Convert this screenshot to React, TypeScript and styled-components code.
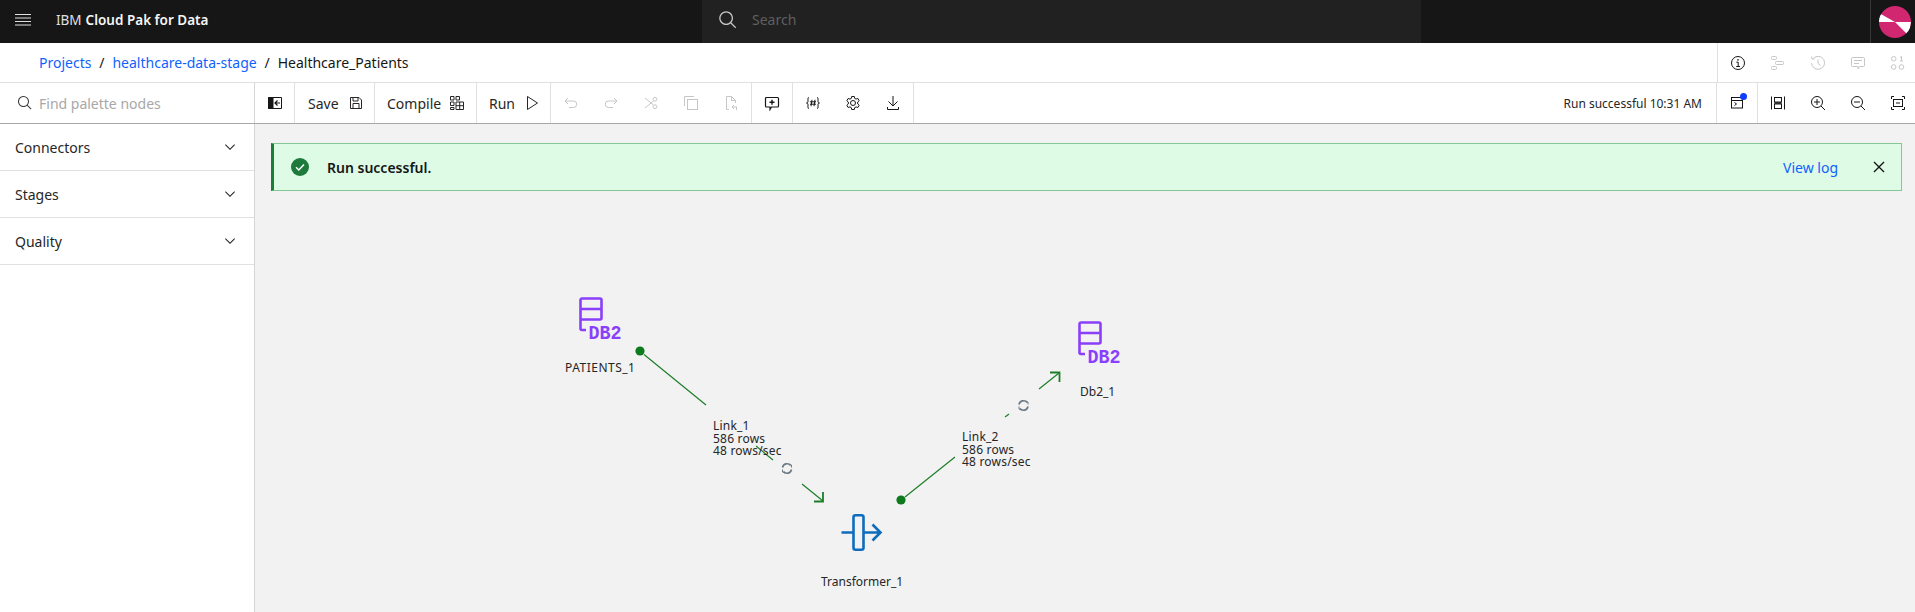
import React from 'react';
import styled, { createGlobalStyle } from 'styled-components';

const GlobalStyle = createGlobalStyle`
  html, body { margin: 0; padding: 0; background: #fff; overflow: hidden; }
  body {
    font-family: "Noto Sans", "Open Sans", sans-serif;
    font-size: 14px;
    color: #161616;
  }
  * { box-sizing: border-box; }
`;

const Page = styled.div`
  width: 1915px;
  height: 612px;
  display: flex;
  flex-direction: column;
  overflow: hidden;
`;

/* top header */
const Header = styled.header`
  height: 43px;
  flex: none;
  display: flex;
  align-items: stretch;
  background: #161616;
  color: #f4f4f4;
`;

const MenuButton = styled.div`
  width: 46px;
  padding: 0 0 4px 14px;
  display: flex;
  align-items: center;
`;

const Brand = styled.div`
  width: 656px;
  display: flex;
  align-items: center;
  gap: 4px;
  padding: 0 0 3px 10px;
  font-size: 13.5px;
  color: #e0e0e0;
  strong { font-weight: 600; color: #f4f4f4; }
`;

const HeaderSearch = styled.div`
  width: 719px;
  background: #212121;
  display: flex;
  align-items: center;
  gap: 14px;
  padding: 0 0 4px 16px;
  color: #5f5f5f;
  font-size: 14px;
  svg { color: #c6c6c6; }
`;

const HeaderSpacer = styled.div`
  flex: 1;
`;

const AvatarCell = styled.div`
  width: 45px;
  border-left: 1px solid #393939;
  display: flex;
  align-items: center;
  justify-content: center;
  padding-left: 3px;
`;

/* breadcrumb row */
const CrumbRow = styled.div`
  height: 40px;
  flex: none;
  display: flex;
  align-items: stretch;
  border-bottom: 1px solid #e0e0e0;
`;

const Crumbs = styled.nav`
  flex: 1;
  display: flex;
  align-items: center;
  padding-left: 39px;
  font-size: 14px;
`;

const CrumbLink = styled.a`
  color: #0f62fe;
`;

const CrumbSlash = styled.span`
  width: 21px;
  text-align: center;
  color: #161616;
`;

const SidePanelIcons = styled.div`
  display: flex;
  border-left: 1px solid #e0e0e0;
  margin-right: -3px;
`;

/* toolbar */
const Toolbar = styled.div`
  height: 41px;
  flex: none;
  display: flex;
  align-items: stretch;
  border-bottom: 1px solid #a8a8a8;
`;

const PaletteSearch = styled.div`
  width: 255px;
  flex: none;
  display: flex;
  align-items: center;
  gap: 6px;
  padding-left: 17px;
  border-right: 1px solid #d6d6d6;
  color: #a8a8a8;
  font-size: 14px;
  svg { color: #393939; }
`;

const ToolGroup = styled.div<{ $width?: number }>`
  display: flex;
  align-items: center;
  flex: none;
  border-right: 1px solid #e0e0e0;
  ${(p) => (p.$width ? `width: ${p.$width}px;` : '')}
`;

const TextTool = styled.div<{ $gap: number; $pad?: number }>`
  display: flex;
  align-items: center;
  gap: ${(p) => p.$gap}px;
  padding-left: ${(p) => p.$pad ?? 12}px;
  font-size: 14px;
  color: #262626;
`;

const IconCell = styled.div<{ $muted?: boolean }>`
  width: 40px;
  height: 40px;
  flex: none;
  display: flex;
  align-items: center;
  justify-content: center;
  position: relative;
  color: ${(p) => (p.$muted ? '#c6c6c6' : '#161616')};
`;

const NotifyDot = styled.span`
  position: absolute;
  top: 10px;
  left: 23px;
  width: 7px;
  height: 7px;
  border-radius: 50%;
  background: #0f3cfe;
`;

const Status = styled.div`
  flex: 1;
  display: flex;
  align-items: center;
  justify-content: flex-end;
  padding-right: 14px;
  font-size: 12px;
  color: #262626;
`;

const BoxedCell = styled.div`
  border-left: 1px solid #e0e0e0;
  border-right: 1px solid #e0e0e0;
`;

const ViewTools = styled.div`
  display: flex;
  margin-right: -3px;
`;

/* body */
const Main = styled.main`
  flex: 1;
  display: flex;
  min-height: 0;
`;

const Sidebar = styled.aside`
  width: 255px;
  flex: none;
  background: #fff;
  border-right: 1px solid #d6d6d6;
`;

const AccordionRow = styled.div`
  height: 47px;
  display: flex;
  align-items: center;
  justify-content: space-between;
  padding: 0 16px 0 15px;
  border-bottom: 1px solid #e0e0e0;
  font-size: 14px;
  color: #262626;
`;

const Canvas = styled.section`
  flex: 1;
  position: relative;
  background: #f2f2f2;
  padding: 19px 13px 0 16px;
`;

const Notification = styled.div`
  height: 48px;
  display: flex;
  align-items: center;
  background: #defbe6;
  border: 1px solid #85c795;
  border-left: 3px solid #198038;
  padding-left: 16px;
  font-size: 14px;
`;

const NotificationTitle = styled.strong`
  margin-left: 17px;
  font-weight: 600;
  flex: 1;
`;

const ViewLog = styled.a`
  color: #0f62fe;
  margin-right: 30px;
`;

const CloseButton = styled.div`
  margin-right: 11px;
  display: flex;
  color: #161616;
`;

const Graph = styled.svg`
  position: absolute;
  left: 0;
  top: 0;
  width: 1660px;
  height: 489px;
  overflow: visible;
`;

const NodeIcon = styled.svg<{ $x: number; $y: number }>`
  position: absolute;
  left: ${(p) => p.$x - 255}px;
  top: ${(p) => p.$y - 124}px;
  overflow: visible;
`;

const NodeLabel = styled.div<{ $x: number; $y: number; $track?: number }>`
  position: absolute;
  left: ${(p) => p.$x - 255}px;
  top: ${(p) => p.$y - 124}px;
  font-size: 12px;
  line-height: 16px;
  letter-spacing: ${(p) => p.$track ?? 0}px;
  white-space: nowrap;
  color: #262626;
`;

const LinkLabel = styled.div<{ $x: number; $y: number }>`
  position: absolute;
  left: ${(p) => p.$x - 255}px;
  top: ${(p) => p.$y - 124}px;
  font-size: 12px;
  line-height: 12.5px;
  letter-spacing: 0.2px;
  white-space: nowrap;
  color: #262626;
`;

const Glyph: React.FC<{ size?: number; children: React.ReactNode }> = ({ size = 16, children }) => (
  <svg width={size} height={size} viewBox="0 0 16 16" fill="none" stroke="currentColor" strokeWidth={1}>
    {children}
  </svg>
);

const Carbon: React.FC<{ size?: number; d: string }> = ({ size = 16, d }) => (
  <svg width={size} height={size} viewBox="0 0 32 32" fill="currentColor">
    <path d={d} />
  </svg>
);

const SEARCH = 'M29 27.5859l-7.5521-7.5521a11.0177 11.0177 0 10-1.4141 1.4141L27.5859 29zM4 13a9 9 0 119 9A9.01 9.01 0 014 13z';
const CHEVRON = 'M16 22L6 12l1.4-1.4 8.6 8.6 8.6-8.6L26 12z';
const CLOSE = 'M24 9.4L22.6 8 16 14.6 9.4 8 8 9.4 14.6 16 8 22.6 9.4 24 16 17.4 22.6 24 24 22.6 17.4 16 24 9.4z';

const Avatar = () => (
  <svg width="32" height="32" viewBox="0 0 32 32">
    <defs>
      <clipPath id="avatar-clip"><circle cx="16" cy="16" r="16" /></clipPath>
    </defs>
    <g clipPath="url(#avatar-clip)">
      <rect width="32" height="32" fill="#d12771" />
      <path d="M20 -2L36 14V-2z" fill="#a8356f" />
      <path d="M-2 20L14 36H-2z" fill="#a8356f" />
      <path d="M0 7L16 16H0z" fill="#fff" />
      <path d="M16 16H32L30 30z" fill="#fff" />
    </g>
  </svg>
);

const Refresh: React.FC<{ cx: number; cy: number }> = ({ cx, cy }) => (
  <g transform={`translate(${cx} ${cy})`} fill="none" stroke="#6b7b86" strokeWidth={1.7}>
    <path d="M-4.5 -1A4.6 4.6 0 0 1 3.6 -3" />
    <path d="M4.5 1A4.6 4.6 0 0 1 -3.6 3" />
    <path d="M2 -4.5L4.5 -3.5L4.5 -1" strokeWidth={1} />
    <path d="M-2 4.5L-4.5 3.5L-4.5 1" strokeWidth={1} />
  </g>
);

const Db2Icon: React.FC<{ x: number; y: number }> = ({ x, y }) => (
  <NodeIcon $x={x} $y={y} width="42" height="42" viewBox="0 0 42 42">
    <path
      d="M7 33H3a1.5 1.5 0 0 1-1.5-1.5V3A1.5 1.5 0 0 1 3 1.5H21A1.5 1.5 0 0 1 22.5 3V21A1.5 1.5 0 0 1 21 22.5H1.5M1.5 12H22.5"
      fill="none"
      stroke="#8a3ffc"
      strokeWidth={2.6}
    />
    <text x="9.5" y="41.5" fontFamily="'Liberation Mono', monospace" fontWeight="700" fontSize="21" textLength="33" lengthAdjust="spacingAndGlyphs" fill="#8a3ffc">DB2</text>
  </NodeIcon>
);

const TransformerIcon = () => (
  <NodeIcon $x={841} $y={514} width="44" height="38" viewBox="0 0 44 38">
    <g fill="none" stroke="#0f6cbd" strokeWidth={2.6}>
      <rect x="12.5" y="1.3" width="10" height="34.4" rx="2" />
      <path d="M0.5 18.5H12.5M22.5 18.5H39M31.5 10.5L39.5 18.5L31.5 26.5" />
    </g>
  </NodeIcon>
);

const Links = () => (
  <Graph viewBox="255 124 1660 489">
    <g stroke="#1c7f28" strokeWidth={1.2} fill="none">
      <path d="M644 354.5L706 405" />
      <path d="M756 446L773 460" />
      <path d="M802 484L823 501" />
      <path d="M814 501.5H823V492" strokeWidth={1.8} />
      <path d="M905 497L955 457" />
      <path d="M1005 417L1009 414" />
      <path d="M1039 389L1059 373" />
      <path d="M1050 372.5H1059.5V382" strokeWidth={1.8} />
    </g>
    <circle cx="640" cy="351" r="4.6" fill="#0e7a1e" />
    <circle cx="901" cy="500" r="4.6" fill="#0e7a1e" />
    <Refresh cx={787} cy={468.5} />
    <Refresh cx={1023.5} cy={405.5} />
  </Graph>
);

const App: React.FC = () => (
  <Page>
    <GlobalStyle />
    <Header>
      <MenuButton>
        <svg width="18" height="14" viewBox="0 0 18 14" stroke="#e0e0e0" strokeWidth={1.2}>
          <path d="M1 1.5H17M1 5H17M1 8.5H17M1 12H17" />
        </svg>
      </MenuButton>
      <Brand>IBM <strong>Cloud Pak for Data</strong></Brand>
      <HeaderSearch>
        <Carbon size={20} d={SEARCH} />
        Search
      </HeaderSearch>
      <HeaderSpacer />
      <AvatarCell><Avatar /></AvatarCell>
    </Header>

    <CrumbRow>
      <Crumbs>
        <CrumbLink>Projects</CrumbLink>
        <CrumbSlash>/</CrumbSlash>
        <CrumbLink>healthcare-data-stage</CrumbLink>
        <CrumbSlash>/</CrumbSlash>
        <span>Healthcare_Patients</span>
      </Crumbs>
      <SidePanelIcons>
        <IconCell>
          <Glyph>
            <circle cx="8" cy="8" r="6.5" />
            <path d="M6.3 7.2H8.2V11.5M6.2 11.5H10" />
            <circle cx="8" cy="4.9" r=".8" fill="currentColor" stroke="none" />
          </Glyph>
        </IconCell>
        <IconCell $muted>
          <Glyph>
            <rect x="1.5" y="1.5" width="5" height="3" rx="1" />
            <rect x="5.5" y="6.5" width="8" height="3" rx="1" />
            <rect x="1.5" y="11.5" width="5" height="3" rx="1" />
          </Glyph>
        </IconCell>
        <IconCell $muted>
          <Glyph>
            <path d="M3.5 3.2A6.5 6.5 0 1 1 1.6 8M1.8 1.5V4H4.6M8 4.5V8.3L10.5 10.5" />
          </Glyph>
        </IconCell>
        <IconCell $muted>
          <Glyph>
            <path d="M2.5 2.5H13.5A1 1 0 0 1 14.5 3.5V10.5A1 1 0 0 1 13.5 11.5H9.5L8 14V11.5H2.5A1 1 0 0 1 1.5 10.5V3.5A1 1 0 0 1 2.5 2.5ZM4 5.5H12M4 8.5H9" />
          </Glyph>
        </IconCell>
        <IconCell $muted>
          <Glyph>
            <rect x="1.5" y="1.5" width="4.5" height="4.5" rx="2.2" />
            <path d="M10 2.5L11.5 1.5V6M10 6H13" />
            <circle cx="3.7" cy="12" r="2.3" />
            <circle cx="11.5" cy="12" r="2.3" />
          </Glyph>
        </IconCell>
      </SidePanelIcons>
    </CrumbRow>

    <Toolbar>
      <PaletteSearch>
        <Carbon d={SEARCH} />
        Find palette nodes
      </PaletteSearch>
      <ToolGroup $width={40}>
        <IconCell>
          <Glyph>
            <path d="M1.5 2H6.5V14H1.5z" fill="currentColor" stroke="none" />
            <path d="M1.5 2.5H14.5V13.5H1.5z" />
            <path d="M13 8H8M10.5 5.5L8 8L10.5 10.5" strokeWidth={1.2} />
          </Glyph>
        </IconCell>
      </ToolGroup>
      <ToolGroup $width={80}>
        <TextTool $gap={9} $pad={13}>
          Save
          <Glyph>
            <path d="M2.5 2.5H11L13.5 5V13.5H2.5zM5 2.5V6H10V2.5M5 13.5V8.5H11V13.5" />
          </Glyph>
        </TextTool>
      </ToolGroup>
      <ToolGroup $width={102}>
        <TextTool $gap={8}>
          Compile
          <Glyph>
            <path d="M1.5 1.5H5V5H1.5zM7 1.5H10.5V5H7zM1.5 7H5V10.5H1.5zM7 7H14.5V14.5H7zM7 10.7H14.5M10.7 7V14.5M1.5 12.5H5V14.5H1.5z" />
          </Glyph>
        </TextTool>
      </ToolGroup>
      <ToolGroup $width={74}>
        <TextTool $gap={9}>
          Run
          <Glyph>
            <path d="M3.5 1.5L13.5 8L3.5 14.5z" />
          </Glyph>
        </TextTool>
      </ToolGroup>
      <ToolGroup>
        <IconCell $muted>
          <Glyph>
            <path d="M2 6H10.5A3 3 0 0 1 10.5 12.5H6M5 3L2 6L5 9" />
          </Glyph>
        </IconCell>
        <IconCell $muted>
          <Glyph>
            <path d="M14 6H5.5A3 3 0 0 0 5.5 12.5H10M11 3L14 6L11 9" />
          </Glyph>
        </IconCell>
        <IconCell $muted>
          <Glyph>
            <path d="M2 3L10.5 10M2 13L10.5 6" />
            <circle cx="12" cy="4.3" r="1.9" />
            <circle cx="12" cy="11.7" r="1.9" />
          </Glyph>
        </IconCell>
        <IconCell $muted>
          <Glyph>
            <rect x="4.5" y="4.5" width="10" height="10" />
            <path d="M1.5 11V1.5H11" />
          </Glyph>
        </IconCell>
        <IconCell $muted>
          <Glyph>
            <path d="M6 14.5H3.5V1.5H8.5L12.5 5.5V8M8.5 1.5V5.5H12.5M14 12H9M11 10L9 12L11 14M13.5 12V15" />
          </Glyph>
        </IconCell>
      </ToolGroup>
      <ToolGroup>
        <IconCell>
          <Glyph>
            <path d="M2.5 2.5H13.5A1 1 0 0 1 14.5 3.5V11A1 1 0 0 1 13.5 12H7.5L6 14.5V12H2.5A1 1 0 0 1 1.5 11V3.5A1 1 0 0 1 2.5 2.5Z" strokeWidth={1.2} />
            <path d="M8 4.7V9.7M5.5 7.2H10.5" strokeWidth={1.4} />
          </Glyph>
        </IconCell>
      </ToolGroup>
      <ToolGroup>
        <IconCell>
          <Glyph>
            <path d="M4 2.5C2.5 2.5 3 4.5 3 6S2.8 7.7 1.5 8C2.8 8.3 3 8.5 3 10S2.5 13.5 4 13.5M12 2.5C13.5 2.5 13 4.5 13 6S13.2 7.7 14.5 8C13.2 8.3 13 8.5 13 10S13.5 13.5 12 13.5" />
            <path d="M7 4.8L6 11.2M10 4.8L9 11.2M5 6.8H11M5 9.2H11" />
          </Glyph>
        </IconCell>
        <IconCell>
          <Glyph>
            <path d="M6.7 1.5H9.3L9.7 3.4L11 4.1L12.9 3.5L14.2 5.7L12.7 7V9L14.2 10.3L12.9 12.5L11 11.9L9.7 12.6L9.3 14.5H6.7L6.3 12.6L5 11.9L3.1 12.5L1.8 10.3L3.3 9V7L1.8 5.7L3.1 3.5L5 4.1L6.3 3.4Z" />
            <circle cx="8" cy="8" r="2.5" />
          </Glyph>
        </IconCell>
        <IconCell>
          <Glyph>
            <path d="M8 1V11M3.5 6.5L8 11L12.5 6.5M2.5 12V14.5H13.5V12" />
          </Glyph>
        </IconCell>
      </ToolGroup>
      <Status>Run successful 10:31 AM</Status>
      <BoxedCell>
        <IconCell>
          <Glyph>
            <rect x="2.5" y="2.5" width="11" height="10.5" />
            <path d="M2.5 5.5H13.5M5.5 7.5L7.5 9L5.5 10.5" />
          </Glyph>
          <NotifyDot />
        </IconCell>
      </BoxedCell>
      <ViewTools>
        <IconCell>
          <Glyph>
            <path d="M1.5 1.5V14.5M14.5 1.5V14.5" />
            <rect x="4.5" y="2.5" width="7" height="4.5" />
            <rect x="4.5" y="9" width="7" height="4.5" />
            <path d="M4.5 7.2H11.5V8.8H4.5z" fill="currentColor" stroke="none" />
          </Glyph>
        </IconCell>
        <IconCell>
          <Glyph>
            <circle cx="7" cy="7" r="5.5" />
            <path d="M11 11L15 15M7 4V10M4 7H10" />
          </Glyph>
        </IconCell>
        <IconCell>
          <Glyph>
            <circle cx="7" cy="7" r="5.5" />
            <path d="M11 11L15 15M4 7H10" />
          </Glyph>
        </IconCell>
        <IconCell>
          <Glyph>
            <path d="M1.5 4V1.5H4M12 1.5H14.5V4M14.5 12V14.5H12M4 14.5H1.5V12" />
            <rect x="3.5" y="4.5" width="9" height="7" />
            <path d="M6 8H10" />
          </Glyph>
        </IconCell>
      </ViewTools>
    </Toolbar>

    <Main>
      <Sidebar>
        {['Connectors', 'Stages', 'Quality'].map((name) => (
          <AccordionRow key={name}>
            {name}
            <Carbon d={CHEVRON} />
          </AccordionRow>
        ))}
      </Sidebar>
      <Canvas>
        <Notification>
          <svg width="20" height="20" viewBox="0 0 20 20">
            <circle cx="10" cy="10" r="9" fill="#1d7a3a" />
            <path d="M6 10.2L8.8 13L14 7.6" fill="none" stroke="#fff" strokeWidth={1.5} />
          </svg>
          <NotificationTitle>Run successful.</NotificationTitle>
          <ViewLog>View log</ViewLog>
          <CloseButton><Carbon size={22} d={CLOSE} /></CloseButton>
        </Notification>
        <Links />
        <Db2Icon x={579} y={297} />
        <NodeLabel $x={565} $y={360} $track={0.5}>PATIENTS_1</NodeLabel>
        <LinkLabel $x={713} $y={420}>Link_1<br />586 rows<br />48 rows/sec</LinkLabel>
        <TransformerIcon />
        <NodeLabel $x={821} $y={574}>Transformer_1</NodeLabel>
        <LinkLabel $x={962} $y={431}>Link_2<br />586 rows<br />48 rows/sec</LinkLabel>
        <Db2Icon x={1078} y={321} />
        <NodeLabel $x={1080} $y={384}>Db2_1</NodeLabel>
      </Canvas>
    </Main>
  </Page>
);

export default App;
